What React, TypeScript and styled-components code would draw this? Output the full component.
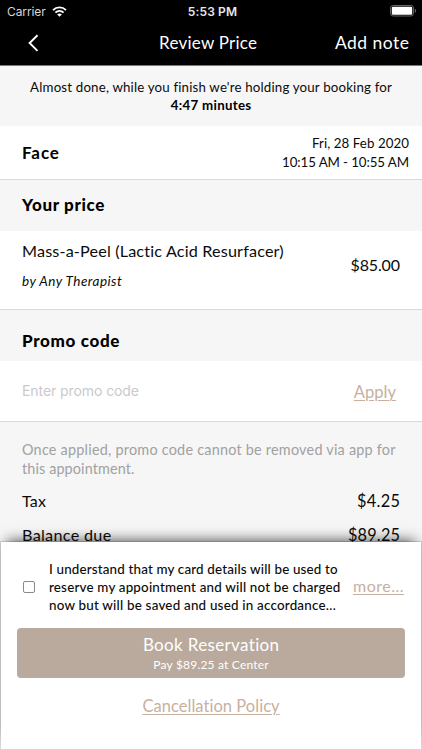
import React from "react";
import styled, { createGlobalStyle } from "styled-components";

const GlobalStyle = createGlobalStyle`
  * { box-sizing: border-box; }
  body { margin: 0; background: #f6f6f6; font-family: Lato, "Noto Sans", sans-serif; color: #0b0b0b; }
`;

const Screen = styled.div`
  display: flex;
  flex-direction: column;
  width: 422px;
  height: 750px;
  overflow: hidden;
  background: #f6f6f6;
`;

type LineProps = {
  $size: number;
  $lh: number;
  $ls?: number;
  $weight?: number;
  $color?: string;
  $italic?: boolean;
};

const Line = styled.div<LineProps>`
  white-space: nowrap;
  font-size: ${(p) => p.$size}px;
  line-height: ${(p) => p.$lh}px;
  letter-spacing: ${(p) => p.$ls ?? 0}px;
  margin-right: ${(p) => -(p.$ls ?? 0)}px;
  font-weight: ${(p) => p.$weight ?? 400};
  font-style: ${(p) => (p.$italic ? "italic" : "normal")};
  color: ${(p) => p.$color ?? "inherit"};
`;

const StatusBar = styled.div`
  display: grid;
  grid-template-columns: 1fr auto 1fr;
  align-items: center;
  height: 22px;
  flex: none;
  padding: 0 4px 0 7px;
  background: #000;
  color: #fff;
  font-family: Inter, sans-serif;
`;

const Carrier = styled.div`
  display: flex;
  align-items: center;
  gap: 6px;
  font-size: 12px;
  letter-spacing: -0.1px;
  color: #d6d6d6;
`;

const Clock = styled.div`
  font-size: 12px;
  font-weight: 600;
  letter-spacing: 0.15px;
  color: #e8e8e8;
`;

const BatterySlot = styled.div`
  display: flex;
  justify-content: flex-end;
`;

const NavBar = styled.header`
  display: grid;
  grid-template-columns: 1fr auto 1fr;
  height: 44px;
  flex: none;
  padding: 9px 13px 0 7px;
  background: #000;
  color: #fff;
  border-bottom: 1px solid #777;
`;

const NavRight = styled.div`
  display: flex;
  justify-content: flex-end;
`;

const BackButton = styled.button`
  display: block;
  width: 13px;
  height: 18px;
  margin: 3px 0 0 20px;
  padding: 0;
  border: 0;
  background: none;
`;

const Banner = styled.div`
  display: flex;
  flex-direction: column;
  align-items: center;
  flex: none;
  height: 60px;
  padding-top: 12px;
`;

const Row = styled.div<{ $height: number; $top: number; $right: number }>`
  display: flex;
  justify-content: space-between;
  flex: none;
  height: ${(p) => p.$height}px;
  padding: ${(p) => p.$top}px ${(p) => p.$right}px 0 22px;
  background: #fff;
  border-bottom: 1px solid #d9d9d9;
`;

const Column = styled.div<{ $end?: boolean; $top?: number; $gap?: number }>`
  display: flex;
  flex-direction: column;
  align-items: ${(p) => (p.$end ? "flex-end" : "flex-start")};
  gap: ${(p) => p.$gap ?? 0}px;
  padding-top: ${(p) => p.$top ?? 0}px;
`;

const SectionTitle = styled.h2<{ $top: number }>`
  flex: none;
  height: 51px;
  margin: 0;
  padding: ${(p) => p.$top}px 22px 0;
  font-size: 17px;
  line-height: 20px;
  font-weight: 900;
  letter-spacing: 0.66px;
  color: #000;
`;

const PromoInput = styled.input`
  width: 220px;
  height: 20px;
  padding: 0;
  border: 0;
  outline: 0;
  background: none;
  font: 14px/20px Inter, sans-serif;
  letter-spacing: -0.08px;
  &::placeholder { color: #c9c9ce; opacity: 1; }
`;

const Link = styled(Line)`
  color: #c8b09f;
  text-decoration: underline;
  text-decoration-thickness: 1px;
  text-underline-offset: 2px;
`;

const Totals = styled.section`
  flex: none;
  height: 120px;
  padding: 18px 22px 0;
`;

const TotalsList = styled.div`
  padding-top: 12px;
`;

const TotalRow = styled.div`
  display: flex;
  justify-content: space-between;
  height: 34px;
`;

const Sheet = styled.section`
  position: relative;
  display: flex;
  flex-direction: column;
  align-items: center;
  flex: none;
  width: 420px;
  height: 207px;
  margin: 0 1px 1px;
  padding: 18px 16px 0;
  background: #fff;
  box-shadow: 0 -7px 13px -6px rgba(0, 0, 0, 0.72), 0 0 0 1px rgba(0, 0, 0, 0.12);
`;

const Consent = styled.div`
  display: grid;
  grid-template-columns: 26px 304px auto;
  width: 100%;
  height: 68px;
  padding-left: 6px;
`;

const Checkbox = styled.div`
  width: 12px;
  height: 12px;
  margin-top: 21px;
  border: 1px solid #8a8a8a;
  border-radius: 2px;
`;

const BookButton = styled.button`
  display: flex;
  flex-direction: column;
  align-items: center;
  flex: none;
  width: 388.5px;
  height: 50px;
  padding: 6px 0 0;
  border: 0;
  border-radius: 4px;
  background: #b9aa9d;
  color: #fff;
  font-family: inherit;
`;

const Policy = styled.div`
  margin-top: 17px;
`;

export default function App() {
  return (
    <>
      <GlobalStyle />
      <Screen>
        <StatusBar>
          <Carrier>
            Carrier
            <svg width="15" height="11" viewBox="0 0 15 11" fill="none" stroke="#fff" strokeWidth="1.9">
              <path d="M1 4.1C4.7.5 10.3.5 14 4.1" />
              <path d="M3.4 6.6c2.4-2.2 5.8-2.2 8.2 0" />
              <path d="M7.5 10.8L5.2 8.4c1.3-1.2 3.3-1.2 4.6 0z" fill="#fff" stroke="none" />
            </svg>
          </Carrier>
          <Clock>5:53 PM</Clock>
          <BatterySlot>
            <svg width="28" height="12" viewBox="0 0 28 12">
              <rect x=".5" y=".5" width="23" height="10.5" rx="2.6" fill="none" stroke="#666" />
              <rect x="1.8" y="1.8" width="20.4" height="8" rx="1.2" fill="#fff" />
              <path d="M24.8 3.8v4c.9-.4 1.3-1.1 1.3-2s-.4-1.6-1.3-2z" fill="#666" />
            </svg>
          </BatterySlot>
        </StatusBar>
        <NavBar>
          <BackButton aria-label="Back">
            <svg width="13" height="18" viewBox="0 0 13 18" fill="none" stroke="#fff" strokeWidth="1.9">
              <path d="M10.5 1.2L2.6 9l7.9 7.9" />
            </svg>
          </BackButton>
          <Line $size={17} $lh={24} $ls={0.24}>Review Price</Line>
          <NavRight>
            <Line $size={17.5} $lh={24} $ls={0.47}>Add note</Line>
          </NavRight>
        </NavBar>
        <Banner>
          <Line $size={13.3} $lh={18} $ls={0.17}>Almost done, while you finish we're holding your booking for</Line>
          <Line $size={13.3} $lh={18} $ls={0.29} $weight={700} $color="#000">4:47 minutes</Line>
        </Banner>
        <Row $height={54} $top={8} $right={13}>
          <Column $top={8}>
            <Line $size={17} $lh={22} $ls={0.9} $weight={700} $color="#000">Face</Line>
          </Column>
          <Column $end>
            <Line $size={13.3} $lh={19} $ls={0.07}>Fri, 28 Feb 2020</Line>
            <Line $size={13.3} $lh={19} $ls={-0.1}>10:15 AM - 10:55 AM</Line>
          </Column>
        </Row>
        <SectionTitle $top={15}>Your price</SectionTitle>
        <Row $height={79} $top={9} $right={22}>
          <Column $gap={10}>
            <Line $size={16.2} $lh={22} $ls={0.16}>Mass-a-Peel (Lactic Acid Resurfacer)</Line>
            <Line $size={13.5} $lh={18} $ls={0.46} $italic>by Any Therapist</Line>
          </Column>
          <Column $end $top={14}>
            <Line $size={16} $lh={22} $ls={-0.15}>$85.00</Line>
          </Column>
        </Row>
        <SectionTitle $top={21}>Promo code</SectionTitle>
        <Row $height={61} $top={20} $right={26}>
          <PromoInput placeholder="Enter promo code" />
          <Link as="a" $size={16.6} $lh={22}>Apply</Link>
        </Row>
        <Totals>
          <Line $size={14.4} $lh={19} $ls={0.236} $color="#a1a1a1">Once applied, promo code cannot be removed via app for</Line>
          <Line $size={14.4} $lh={20} $ls={0.12} $color="#a1a1a1">this appointment.</Line>
          <TotalsList>
            <TotalRow>
              <Line $size={16} $lh={20} $ls={0.2}>Tax</Line>
              <Line $size={16.3} $lh={20} $ls={0.35}>$4.25</Line>
            </TotalRow>
            <TotalRow>
              <Line $size={16.2} $lh={20} $ls={0.3}>Balance due</Line>
              <Line $size={16.3} $lh={20} $ls={0.2}>$89.25</Line>
            </TotalRow>
          </TotalsList>
        </Totals>
        <Sheet>
          <Consent>
            <Checkbox role="checkbox" aria-checked={false} />
            <Column>
              <Line $size={13.4} $lh={18} $ls={0.16} $weight={500}>I understand that my card details will be used to</Line>
              <Line $size={13.4} $lh={18} $ls={0.19} $weight={500}>reserve my appointment and will not be charged</Line>
              <Line $size={13.4} $lh={18} $ls={0.21} $weight={500}>now but will be saved and used in accordance…</Line>
            </Column>
            <Column $top={15}>
              <Link as="a" $size={16} $lh={22} $ls={0.5}>more...</Link>
            </Column>
          </Consent>
          <BookButton>
            <Line $size={17} $lh={21} $ls={0.35}>Book Reservation</Line>
            <Line $size={12} $lh={20} $ls={0.2}>Pay $89.25 at Center</Line>
          </BookButton>
          <Policy>
            <Link as="a" $size={16.5} $lh={22} $ls={0.04}>Cancellation Policy</Link>
          </Policy>
        </Sheet>
      </Screen>
    </>
  );
}
